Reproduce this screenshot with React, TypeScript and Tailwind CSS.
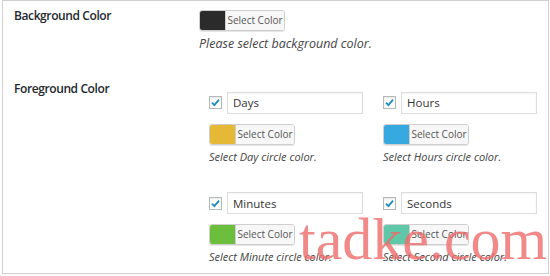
import React from "react";

type Item = { name: string; color: string; hint: string };

const items: Item[] = [
  { name: "Days", color: "#e5b935", hint: "Select Day circle color." },
  { name: "Hours", color: "#36a9e1", hint: "Select Hours circle color." },
  { name: "Minutes", color: "#6cbf3c", hint: "Select Minute circle color." },
  { name: "Seconds", color: "#5ec8a9", hint: "Select Second circle color." },
];

function ColorPicker({ color }: { color: string }) {
  return (
    <div className="flex h-[21px] w-[86px] overflow-hidden rounded-[3px] border border-[#cfcfcf] shadow-[0_1px_0_#e5e5e5]">
      <span className="h-full w-[25px] shrink-0" style={{ backgroundColor: color }} />
      <span className="flex flex-1 items-center justify-center whitespace-nowrap border-l border-[#cfcfcf] bg-[#f7f7f7] text-[10px] text-[#555]">
        Select Color
      </span>
    </div>
  );
}

function Check() {
  return (
    <span className="flex h-[13px] w-[13px] items-center justify-center border border-[#b4b9be] bg-white shadow-[inset_0_1px_2px_rgba(0,0,0,0.1)]">
      <svg viewBox="0 0 12 12" className="h-[11px] w-[11px]">
        <path d="M2.2 6.2 4.8 8.8 9.8 2.8" fill="none" stroke="#1e8cbe" strokeWidth="2" />
      </svg>
    </span>
  );
}

function Counter({ item }: { item: Item }) {
  return (
    <div className="flex flex-col">
      <div className="flex items-center gap-[5px]">
        <Check />
        <div className="flex h-[22px] w-[136px] items-center border border-[#ddd] px-[5px] text-[11.5px] text-[#333] shadow-[inset_0_1px_2px_rgba(0,0,0,0.05)]">
          {item.name}
        </div>
      </div>
      <div className="mt-[10px]">
        <ColorPicker color={item.color} />
      </div>
      <p className="mt-[4px] whitespace-nowrap text-[11px] italic text-[#444]">{item.hint}</p>
    </div>
  );
}

export default function App() {
  return (
    <div className="h-[276px] w-[550px] bg-white" style={{ fontFamily: '"Open Sans", "Noto Sans", sans-serif' }}>
      <div className="relative ml-[2px] h-[274px] w-[547px] overflow-hidden border border-[#cfcfcf]">
        <div className="grid grid-cols-[185px_1fr] pl-[11px] pt-[6px]">
          <div className="text-[12px] font-semibold tracking-[-0.4px] text-[#23282d]">Background Color</div>
          <div className="pt-[3px]">
            <ColorPicker color="#2b2b2b" />
            <p className="mt-[4px] text-[12.5px] italic text-[#444]">Please select background color.</p>
          </div>

          <div className="pt-[26px] text-[12px] font-semibold tracking-[-0.4px] text-[#23282d]">Foreground Color</div>
          <div className="grid grid-cols-[174px_174px] gap-y-[27px] pl-[10px] pt-[38px]">
            {items.map((item) => (
              <Counter key={item.name} item={item} />
            ))}
          </div>
        </div>

        {/* watermark */}
        <span
          className="pointer-events-none absolute left-[296px] top-[208px] text-[60px] leading-none text-[#ee6b6b]/80"
          style={{ fontFamily: '"Liberation Serif", serif' }}
        >
          tadke.com
        </span>
      </div>
    </div>
  );
}
